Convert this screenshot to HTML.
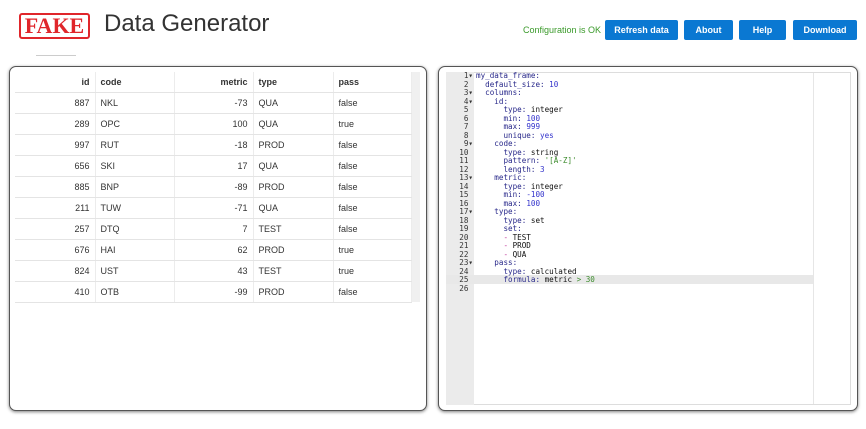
<!DOCTYPE html><html><head><style>
body{margin:0;width:866px;height:429px;background:#fff;font-family:"Liberation Sans",sans-serif;position:relative;overflow:hidden}
.abs{position:absolute}
.logo{left:19px;top:13px;width:71px;height:26px;border:2.5px solid #e0262b;border-radius:3px;box-sizing:border-box;color:#e0262b;font-family:"Liberation Serif",serif;font-weight:bold;font-size:22px;line-height:22px;text-align:center;letter-spacing:0px}
.title{left:104px;top:10px;font-size:24px;color:#333}
.tiny{left:36px;top:55px;width:40px;height:1px;background:#ccc}
.ok{left:523px;top:25px;font-size:9px;color:#3a9a2a}
.btn{top:20px;height:20px;background:#0a78d2;color:#fff;font-size:9px;font-weight:bold;text-align:center;line-height:20px;border-radius:2px}
.panel{top:66px;height:345px;border:1.5px solid #555;border-radius:7px;box-sizing:border-box;box-shadow:0 1px 3px rgba(0,0,0,.5);background:#fff}
table{position:absolute;left:15px;top:72px;width:397px;border-collapse:collapse;font-size:9px;color:#333}
td,th{height:21px;border-right:1px solid #ececec;border-bottom:1px solid #e4e4e4;padding:0 5px;box-sizing:border-box}
th{font-weight:bold;text-align:left;height:20px}
.r{text-align:right}
.sb{left:412px;top:72px;width:8px;height:230px;background:#f0f0f0}
.ed{left:446px;top:72px;width:405px;height:333px;border:1px solid #ddd;box-sizing:border-box}
.gut{left:446px;top:72px;width:28px;height:333px;background:#ebebeb}
.code{left:446px;top:72px;font-family:"DejaVu Sans Mono","Liberation Mono",monospace;font-size:7.6px;line-height:8.5px;white-space:pre;color:#111}
.ln{display:inline-block;width:27px;text-align:right;color:#333;margin-right:3px}
.k{color:#28288a}.n{color:#3333cc}.s{color:#3a8a2a}.d{color:#c0379a}
.hl{left:446px;top:275px;width:368px;height:8.5px;background:#e8e8e8}
.pm{left:813px;top:73px;width:1px;height:331px;background:#e6e6e6}
</style></head><body>
<div class="abs logo">FAKE</div>
<div class="abs title">Data Generator</div>
<div class="abs tiny"></div>
<div class="abs ok">Configuration is OK</div>
<div class="abs btn" style="left:605px;width:73px">Refresh data</div>
<div class="abs btn" style="left:684px;width:49px">About</div>
<div class="abs btn" style="left:739px;width:47px">Help</div>
<div class="abs btn" style="left:793px;width:64px">Download</div>
<div class="abs panel" style="left:9px;width:418px"></div>
<div class="abs panel" style="left:438px;width:420px"></div>
<table>
<tr><th class="r" style="width:80px">id</th><th style="width:79px">code</th><th class="r" style="width:79px">metric</th><th style="width:80px">type</th><th>pass</th></tr>
<tr><td class="r">887</td><td>NKL</td><td class="r">-73</td><td>QUA</td><td>false</td></tr>
<tr><td class="r">289</td><td>OPC</td><td class="r">100</td><td>QUA</td><td>true</td></tr>
<tr><td class="r">997</td><td>RUT</td><td class="r">-18</td><td>PROD</td><td>false</td></tr>
<tr><td class="r">656</td><td>SKI</td><td class="r">17</td><td>QUA</td><td>false</td></tr>
<tr><td class="r">885</td><td>BNP</td><td class="r">-89</td><td>PROD</td><td>false</td></tr>
<tr><td class="r">211</td><td>TUW</td><td class="r">-71</td><td>QUA</td><td>false</td></tr>
<tr><td class="r">257</td><td>DTQ</td><td class="r">7</td><td>TEST</td><td>false</td></tr>
<tr><td class="r">676</td><td>HAI</td><td class="r">62</td><td>PROD</td><td>true</td></tr>
<tr><td class="r">824</td><td>UST</td><td class="r">43</td><td>TEST</td><td>true</td></tr>
<tr><td class="r">410</td><td>OTB</td><td class="r">-99</td><td>PROD</td><td>false</td></tr>
</table>
<div class="abs sb"></div>
<div class="abs ed"></div>
<div class="abs gut"></div>
<div class="abs hl"></div>
<div class="abs pm"></div>
<div class="abs code"><span class="ln">1▾</span><span class="k">my_data_frame:</span>
<span class="ln">2 </span>  <span class="k">default_size:</span> <span class="n">10</span>
<span class="ln">3▾</span>  <span class="k">columns:</span>
<span class="ln">4▾</span>    <span class="k">id:</span>
<span class="ln">5 </span>      <span class="k">type:</span> integer
<span class="ln">6 </span>      <span class="k">min:</span> <span class="n">100</span>
<span class="ln">7 </span>      <span class="k">max:</span> <span class="n">999</span>
<span class="ln">8 </span>      <span class="k">unique:</span> <span class="n">yes</span>
<span class="ln">9▾</span>    <span class="k">code:</span>
<span class="ln">10 </span>      <span class="k">type:</span> string
<span class="ln">11 </span>      <span class="k">pattern:</span> <span class="s">'[A-Z]'</span>
<span class="ln">12 </span>      <span class="k">length:</span> <span class="n">3</span>
<span class="ln">13▾</span>    <span class="k">metric:</span>
<span class="ln">14 </span>      <span class="k">type:</span> integer
<span class="ln">15 </span>      <span class="k">min:</span> <span class="n">-100</span>
<span class="ln">16 </span>      <span class="k">max:</span> <span class="n">100</span>
<span class="ln">17▾</span>    <span class="k">type:</span>
<span class="ln">18 </span>      <span class="k">type:</span> set
<span class="ln">19 </span>      <span class="k">set:</span>
<span class="ln">20 </span>      <span class="d">-</span> TEST
<span class="ln">21 </span>      <span class="d">-</span> PROD
<span class="ln">22 </span>      <span class="d">-</span> QUA
<span class="ln">23▾</span>    <span class="k">pass:</span>
<span class="ln">24 </span>      <span class="k">type:</span> calculated
<span class="ln">25 </span>      <span class="k">formula:</span> metric <span class="s">&gt; 30</span>
<span class="ln">26 </span></div>
</body></html>
